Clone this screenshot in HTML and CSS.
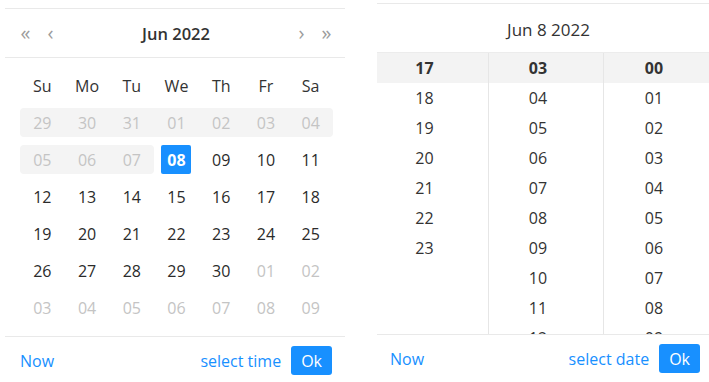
FILE: index.html
```html
<!DOCTYPE html>
<html lang="en">
<head>
  <meta charset="UTF-8">
  <title>Date time picker</title>
  <link rel="stylesheet" href="styles.css">
</head>
<body>
  <div class="pickers">

    <div class="panel date-panel">
      <div class="panel-header">
        <div class="nav-group">
          <span class="nav-btn">«</span>
          <span class="nav-btn">‹</span>
        </div>
        <div class="header-title">Jun 2022</div>
        <div class="nav-group">
          <span class="nav-btn">›</span>
          <span class="nav-btn">»</span>
        </div>
      </div>

      <div class="panel-body">
        <div class="week-row">
          <span>Su</span><span>Mo</span><span>Tu</span><span>We</span><span>Th</span><span>Fr</span><span>Sa</span>
        </div>
        <div class="date-grid">
          <span class="cell muted range range-start">29</span>
          <span class="cell muted range">30</span>
          <span class="cell muted range">31</span>
          <span class="cell muted range">01</span>
          <span class="cell muted range">02</span>
          <span class="cell muted range">03</span>
          <span class="cell muted range range-end">04</span>

          <span class="cell muted range range-start">05</span>
          <span class="cell muted range">06</span>
          <span class="cell muted range range-end">07</span>
          <span class="cell"><span class="selected">08</span></span>
          <span class="cell">09</span>
          <span class="cell">10</span>
          <span class="cell">11</span>

          <span class="cell">12</span>
          <span class="cell">13</span>
          <span class="cell">14</span>
          <span class="cell">15</span>
          <span class="cell">16</span>
          <span class="cell">17</span>
          <span class="cell">18</span>

          <span class="cell">19</span>
          <span class="cell">20</span>
          <span class="cell">21</span>
          <span class="cell">22</span>
          <span class="cell">23</span>
          <span class="cell">24</span>
          <span class="cell">25</span>

          <span class="cell">26</span>
          <span class="cell">27</span>
          <span class="cell">28</span>
          <span class="cell">29</span>
          <span class="cell">30</span>
          <span class="cell muted">01</span>
          <span class="cell muted">02</span>

          <span class="cell muted">03</span>
          <span class="cell muted">04</span>
          <span class="cell muted">05</span>
          <span class="cell muted">06</span>
          <span class="cell muted">07</span>
          <span class="cell muted">08</span>
          <span class="cell muted">09</span>
        </div>
      </div>

      <div class="panel-footer">
        <a class="link">Now</a>
        <span class="spacer"></span>
        <a class="link">select time</a>
        <button class="btn-ok">Ok</button>
      </div>
    </div>

    <div class="panel time-panel">
      <div class="time-header">Jun 8 2022</div>

      <div class="time-columns">
        <ul class="time-col">
          <li class="active">17</li>
          <li>18</li>
          <li>19</li>
          <li>20</li>
          <li>21</li>
          <li>22</li>
          <li>23</li>
        </ul>
        <ul class="time-col">
          <li class="active">03</li>
          <li>04</li>
          <li>05</li>
          <li>06</li>
          <li>07</li>
          <li>08</li>
          <li>09</li>
          <li>10</li>
          <li>11</li>
          <li>12</li>
        </ul>
        <ul class="time-col">
          <li class="active">00</li>
          <li>01</li>
          <li>02</li>
          <li>03</li>
          <li>04</li>
          <li>05</li>
          <li>06</li>
          <li>07</li>
          <li>08</li>
          <li>09</li>
        </ul>
      </div>

      <div class="panel-footer time-footer">
        <a class="link">Now</a>
        <span class="spacer"></span>
        <a class="link">select date</a>
        <button class="btn-ok">Ok</button>
      </div>
    </div>

  </div>
</body>
</html>
```

FILE: styles.css
```css
* {
  box-sizing: border-box;
  margin: 0;
  padding: 0;
}

body {
  width: 709px;
  height: 382px;
  overflow: hidden;
  font-family: 'Open Sans', 'Noto Sans', sans-serif;
  font-size: 16px;
  color: #333;
  background: #fff;
}

.pickers {
  display: flex;
  align-items: flex-start;
}

.panel {
  border-top: 1px solid #e9e9e9;
  background: #fff;
  flex-shrink: 0;
}

/* date panel */

.date-panel {
  width: 340px;
  margin-left: 5px;
  margin-top: 8px;
}

.panel-header {
  display: flex;
  align-items: center;
  height: 49px;
  padding: 0 6px 0 8px;
  border-bottom: 1px solid #e9e9e9;
}

.nav-group {
  display: flex;
}

.nav-btn {
  width: 25px;
  text-align: center;
  font-size: 20px;
  color: #9c9c9c;
  line-height: 1;
  cursor: pointer;
}

.header-title {
  flex: 1;
  text-align: center;
  font-weight: 600;
  font-size: 16.5px;
  color: #333;
}

.panel-body {
  padding: 10px 12px 14px 15px;
}

.week-row {
  display: grid;
  grid-template-columns: repeat(7, 1fr);
  height: 36px;
  align-items: center;
  text-align: center;
  color: #333;
}

.date-grid {
  display: grid;
  grid-template-columns: repeat(7, 1fr);
  grid-auto-rows: 29px;
  row-gap: 8px;
  margin-top: 4px;
}

.cell {
  display: flex;
  align-items: center;
  justify-content: center;
  color: #2b2b2b;
}

.cell.muted {
  color: #c4c4c4;
}

.cell.range {
  background: #f4f4f4;
}

.cell.range-start {
  border-radius: 4px 0 0 4px;
}

.cell.range-end {
  border-radius: 0 4px 4px 0;
}

.selected {
  display: flex;
  align-items: center;
  justify-content: center;
  width: 30px;
  height: 29px;
  background: #1890ff;
  color: #fff;
  font-weight: 700;
  border-radius: 2px;
}

.panel-footer {
  display: flex;
  align-items: center;
  gap: 10px;
  padding: 9px 13px 8px 15px;
  border-top: 1px solid #e9e9e9;
}

.spacer {
  flex: 1;
}

.link {
  color: #1890ff;
  cursor: pointer;
}

.btn-ok {
  height: 29px;
  padding: 0 10px;
  border: none;
  border-radius: 3px;
  background: #1890ff;
  color: #fff;
  font-family: inherit;
  font-size: 16px;
  cursor: pointer;
}

/* time panel */

.time-panel {
  width: 343px;
  margin-left: 32px;
  margin-top: 3px;
}

.time-header {
  height: 49px;
  padding-top: 3px;
  display: flex;
  align-items: center;
  justify-content: center;
  border-bottom: 1px solid #ececec;
  font-size: 17px;
  color: #333;
}

.time-columns {
  display: grid;
  grid-template-columns: 111px 115px 117px;
  height: 281px;
  overflow: hidden;
}

.time-col {
  list-style: none;
  overflow: hidden;
}

.time-col + .time-col {
  border-left: 1px solid #e6e6e6;
}

.time-col li {
  height: 30px;
  line-height: 30px;
  padding-right: 16px;
  text-align: center;
  color: #333;
}

.time-col li.active {
  background: #f3f3f3;
  font-weight: 700;
}

.time-footer {
  padding: 9px 20px 8px 13px;
}
```
